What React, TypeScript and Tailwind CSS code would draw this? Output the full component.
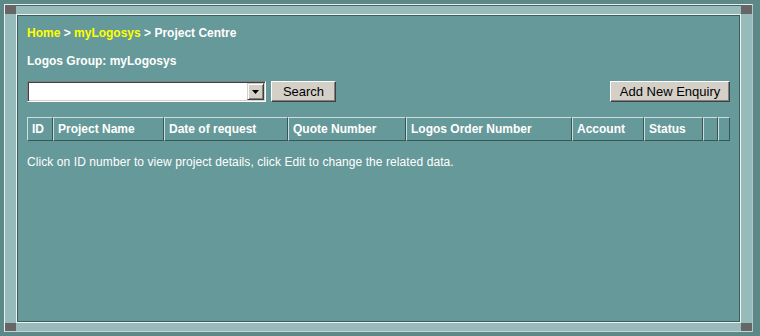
const columns = [
  { label: 'ID', w: 'w-[26px]' },
  { label: 'Project Name', w: 'w-[111px]' },
  { label: 'Date of request', w: 'w-[124px]' },
  { label: 'Quote Number', w: 'w-[118px]' },
  { label: 'Logos Order Number', w: 'w-[166px]' },
  { label: 'Account', w: 'w-[72px]' },
  { label: 'Status', w: 'w-[59px]' },
  { label: '', w: 'w-[15px]' },
  { label: '', w: 'w-[12px]' },
]

function ClassicButton({ children, className }: { children: React.ReactNode; className?: string }) {
  return (
    <button
      className={
        'h-[21px] bg-[#d4d0c8] border border-t-white border-l-white border-b-[#404040] border-r-[#404040] shadow-[inset_-1px_-1px_0_#808080] text-[13px] leading-[15px] text-black ' +
        (className ?? '')
      }
    >
      {children}
    </button>
  )
}

function Combo() {
  return (
    <div className="flex h-[21px] w-[239px] border border-t-[#808080] border-l-[#808080] border-b-white border-r-white bg-white shadow-[inset_1px_1px_0_#404040,inset_-1px_-1px_0_#d4d0c8] p-[1px]">
      <div className="flex-1" />
      <div className="flex h-[17px] w-[17px] items-center justify-center bg-[#d4d0c8] border border-t-[#d4d0c8] border-l-[#d4d0c8] border-b-[#404040] border-r-[#404040] shadow-[inset_1px_1px_0_#ffffff,inset_-1px_-1px_0_#808080]">
        <svg width="7" height="4" viewBox="0 0 7 4">
          <path d="M0 0h7L3.5 4z" fill="#000" />
        </svg>
      </div>
    </div>
  )
}

export default function App() {
  return (
    <div className="h-[336px] w-[760px] bg-[#5c8888] pl-[4px] pt-[4px] font-['Liberation_Sans',Arial,sans-serif]">
      <div className="grid h-[328px] w-[749px] grid-cols-[11px_725px_11px] grid-rows-[9px_309px_8px] border border-[#e6efef] border-r-[#b4c6c6] border-b-[#c4d4d4] bg-[#97baba]">
        <div className="bg-[#666666]" />
        <div className="shadow-[inset_0_1px_0_#4a6666]" />
        <div className="bg-[#666666]" />

        <div />
        <div className="border border-[#eef4f4] bg-[#669999] px-[10px] pt-[11px] shadow-[inset_1px_1px_0_#3d5c5c,inset_-1px_-1px_0_#3d5c5c]">
          <div className="text-[12px] font-bold leading-[15px] text-white">
            <span className="text-[#ffff00]">Home</span> &gt; <span className="text-[#ffff00]">myLogosys</span> &gt; Project Centre
          </div>
          <div className="mt-[13px] text-[12px] font-bold leading-[15px] text-white">Logos Group: myLogosys</div>

          <div className="mt-[12px] flex items-start">
            <Combo />
            <ClassicButton className="ml-[5px] w-[65px]">Search</ClassicButton>
            <ClassicButton className="ml-auto w-[120px]">Add New Enquiry</ClassicButton>
          </div>

          <div className="mt-[15px] flex h-[24px]">
            {columns.map((c, i) => (
              <div
                key={i}
                className={
                  c.w +
                  ' flex items-center border border-t-[#cddddd] border-l-[#cddddd] border-b-[#385656] border-r-[#385656] pl-[4px] text-[12px] font-bold leading-[15px] whitespace-nowrap text-white'
                }
              >
                {c.label}
              </div>
            ))}
          </div>

          <div className="mt-[14px] text-[12px] leading-[15px] tracking-[0.08px] text-white">
            Click on ID number to view project details, click Edit to change the related data.
          </div>
        </div>
        <div />

        <div className="bg-[#666666]" />
        <div />
        <div className="bg-[#666666]" />
      </div>
    </div>
  )
}
